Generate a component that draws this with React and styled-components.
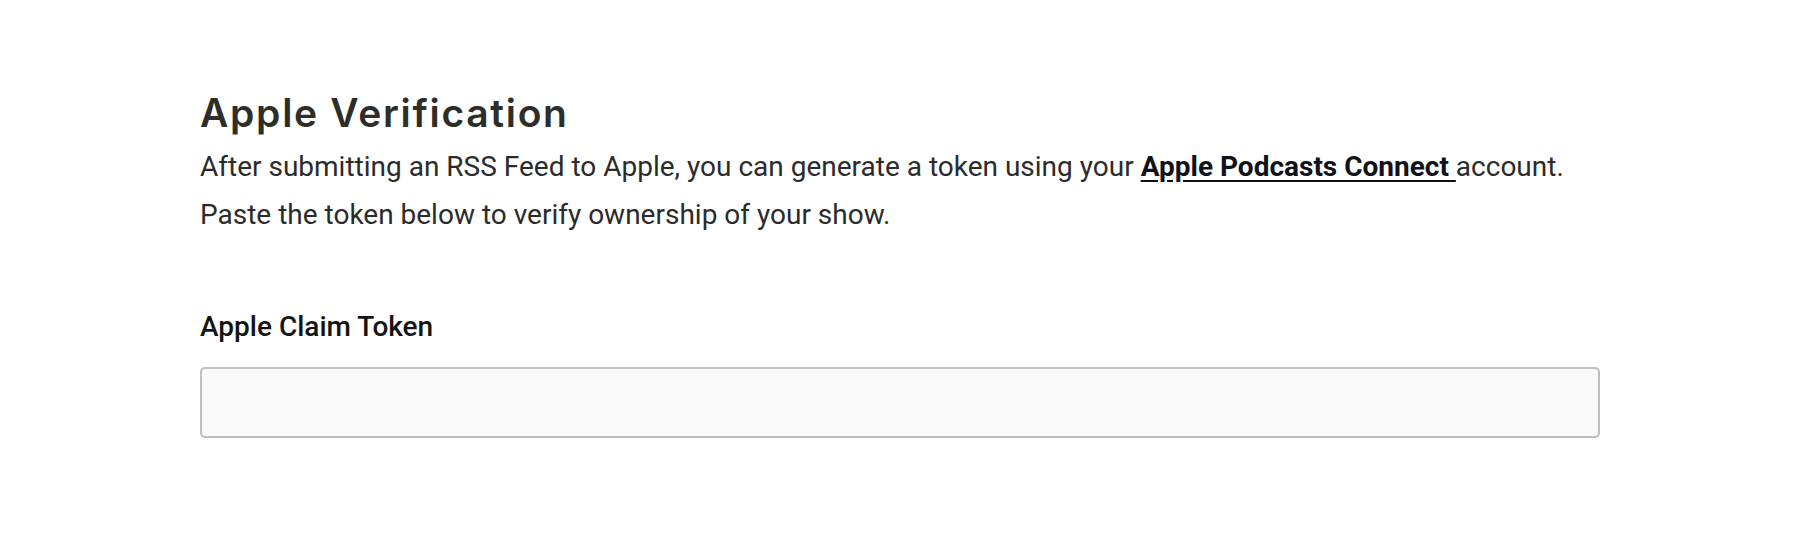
import React, { useState } from 'react'
import styled, { createGlobalStyle } from 'styled-components'

const Global = createGlobalStyle`
  body {
    margin: 0;
    background: #ffffff;
    font-family: Roboto, 'Liberation Sans', sans-serif;
  }
`

const Page = styled.div`
  padding: 91px 200px 0 200px;
`

const Section = styled.section`
  width: 1400px;
  display: flex;
  flex-direction: column;
`

const Title = styled.h2`
  margin: 0 0 8px 0;
  font-family: Inter, 'Liberation Sans', sans-serif;
  font-weight: 600;
  font-size: 39px;
  line-height: 44px;
  color: #2d2d29;
  letter-spacing: 1.7px;
`

const Intro = styled.p`
  margin: 0;
  font-size: 28px;
  line-height: 48px;
  color: #2b2b2b;
  a {
    color: #11111a;
    font-weight: 700;
    text-decoration: underline;
    text-underline-offset: 4px;
  }
`

const Field = styled.div`
  display: flex;
  flex-direction: column;
  gap: 25px;
  margin-top: 73px;
`

const Label = styled.label`
  font-size: 28px;
  font-weight: 500;
  color: #141414;
  line-height: 30px;
`

const Input = styled.input`
  box-sizing: border-box;
  width: 100%;
  height: 71px;
  border: 2px solid #bfbfbf;
  border-radius: 5px;
  background: #f9f9fa;
  padding: 0 18px;
  font-family: Roboto, sans-serif;
  font-size: 24px;
  outline: none;
`

export default function App() {
  const [token, setToken] = useState('')
  return (
    <>
      <Global />
      <Page>
        <Section>
          <Title>Apple Verification</Title>
          <Intro>
            After submitting an RSS Feed to Apple, you can generate a token using your{' '}
            <a href="#connect">Apple Podcasts Connect </a>account.
            <br />
            Paste the token below to verify ownership of your show.
          </Intro>
          <Field>
            <Label htmlFor="claim">Apple Claim Token</Label>
            <Input id="claim" value={token} onChange={e => setToken(e.target.value)} />
          </Field>
        </Section>
      </Page>
    </>
  )
}
